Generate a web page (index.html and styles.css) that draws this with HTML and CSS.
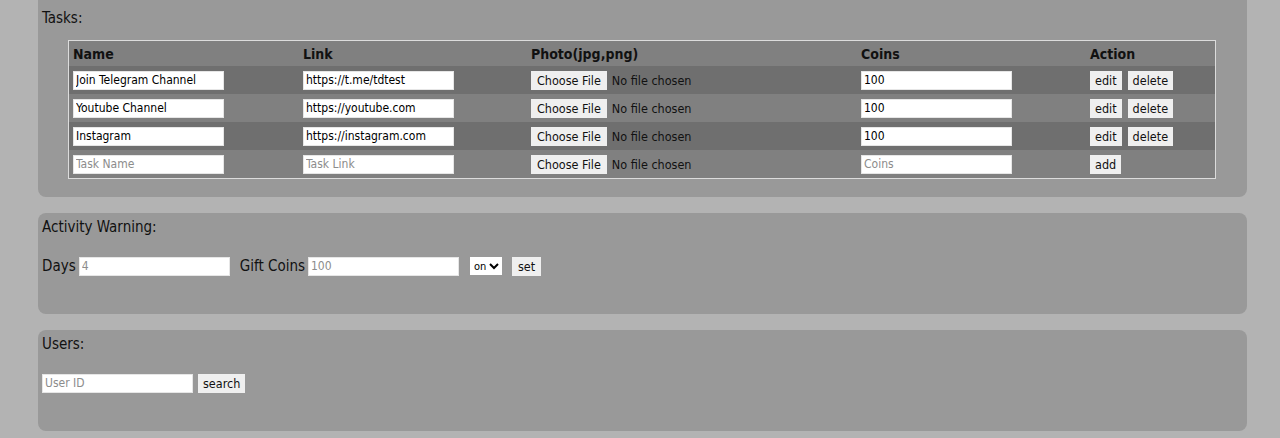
FILE: index.html
```html
<!DOCTYPE html>
<html>
<head>
<meta charset="utf-8">
<link rel="stylesheet" href="styles.css">
</head>
<body>
<div class="page">
  <section class="card card-tasks">
    <div class="card-title">Tasks:</div>
    <table class="tasks">
      <thead>
        <tr>
          <th class="c-name">Name</th>
          <th class="c-link">Link</th>
          <th class="c-photo">Photo(jpg,png)</th>
          <th class="c-coins">Coins</th>
          <th class="c-action">Action</th>
        </tr>
      </thead>
      <tbody>
        <tr class="dark">
          <td><input class="field" type="text" value="Join Telegram Channel"></td>
          <td><input class="field" type="text" value="https://t.me/tdtest"></td>
          <td><input class="file" type="file"></td>
          <td><input class="field" type="text" value="100"></td>
          <td><button class="btn">edit</button><button class="btn">delete</button></td>
        </tr>
        <tr class="light">
          <td><input class="field" type="text" value="Youtube Channel"></td>
          <td><input class="field" type="text" value="https://youtube.com"></td>
          <td><input class="file" type="file"></td>
          <td><input class="field" type="text" value="100"></td>
          <td><button class="btn">edit</button><button class="btn">delete</button></td>
        </tr>
        <tr class="dark">
          <td><input class="field" type="text" value="Instagram"></td>
          <td><input class="field" type="text" value="https://instagram.com"></td>
          <td><input class="file" type="file"></td>
          <td><input class="field" type="text" value="100"></td>
          <td><button class="btn">edit</button><button class="btn">delete</button></td>
        </tr>
        <tr class="light">
          <td><input class="field" type="text" placeholder="Task Name"></td>
          <td><input class="field" type="text" placeholder="Task Link"></td>
          <td><input class="file" type="file"></td>
          <td><input class="field" type="text" placeholder="Coins"></td>
          <td><button class="btn">add</button></td>
        </tr>
      </tbody>
    </table>
  </section>

  <section class="card card-small">
    <div class="card-title">Activity Warning:</div>
    <div class="form-row">
      <label class="lbl">Days</label>
      <input class="field" type="text" placeholder="4">
      <label class="lbl lbl-gap">Gift Coins</label>
      <input class="field" type="text" placeholder="100">
      <select class="sel"><option>on</option><option>off</option></select>
      <button class="btn btn-set">set</button>
    </div>
  </section>

  <section class="card card-small">
    <div class="card-title">Users:</div>
    <div class="form-row">
      <input class="field" type="text" placeholder="User ID">
      <button class="btn btn-search">search</button>
    </div>
  </section>
</div>
</body>
</html>
```
FILE: styles.css
```css
html, body {
  margin: 0;
  padding: 0;
}
body {
  background: #b3b3b3;
  font-family: "DejaVu Sans Condensed", "DejaVu Sans", "Liberation Sans", sans-serif;
  font-stretch: condensed;
  color: #111;
  height: 438px;
  overflow: hidden;
}
.page {
  width: 1209px;
  margin-left: 38px;
  margin-top: -10px;
  display: flex;
  flex-direction: column;
  gap: 16px;
}
.card {
  background: #999999;
  border-radius: 8px;
  padding: 4px 4px;
}
.card-tasks {
  padding-top: 18px;
  padding-bottom: 18px;
}
.card-title {
  font-size: 15px;
  line-height: 20px;
}
.tasks {
  margin: 12px 27px 0 26px;
  width: 1148px;
  border-collapse: collapse;
  border: 1px solid #dcdcdc;
  font-size: 13px;
}
.tasks th {
  background: #808080;
  text-align: left;
  font-weight: bold;
  font-size: 14px;
  height: 25px;
  padding: 0 4px;
}
.tasks td {
  padding: 0 4px;
  height: 28px;
}
.tasks tr.dark td { background: #6f6f6f; }
.tasks tr.light td { background: #808080; }
.c-name { width: 222px; }
.c-link { width: 220px; }
.c-coins { width: 221px; }
.c-photo { width: 322px; }

.field {
  box-sizing: border-box;
  width: 151px;
  height: 19px;
  border: 1px solid #e6e6e6;
  background: #fff;
  padding: 0 2px;
  font-family: inherit;
  font-stretch: condensed;
  font-size: 12px;
  color: #000;
  vertical-align: middle;
  outline: none;
}
.field::placeholder { color: #8c8c8c; }

.file {
  font-family: inherit;
  font-stretch: condensed;
  font-size: 12.5px;
  color: #111;
  vertical-align: middle;
}
.file::file-selector-button {
  background: #efefef;
  border: none;
  height: 19px;
  padding: 0 6px;
  margin-right: 5px;
  font-family: inherit;
  font-stretch: condensed;
  font-size: 12.5px;
  color: #111;
}

.btn {
  background: #efefef;
  border: none;
  height: 19px;
  padding: 0 5px;
  margin-right: 6px;
  font-family: inherit;
  font-stretch: condensed;
  font-size: 12.5px;
  color: #111;
  vertical-align: middle;
}

.card-small {
  height: 93px;
}
.form-row {
  margin-top: 18px;
  display: flex;
  align-items: center;
  height: 22px;
}
.lbl {
  font-size: 15px;
  margin-right: 3px;
}
.lbl-gap { margin-left: 10px; }
.sel {
  margin-left: 11px;
  width: 32px;
  height: 18px;
  border: none;
  background: #fff;
  font-family: inherit;
  font-stretch: condensed;
  font-size: 11px;
  padding: 0;
}
.btn-set { margin-left: 10px; padding: 0 6px; }
.btn-search { margin-left: 5px; }
```
